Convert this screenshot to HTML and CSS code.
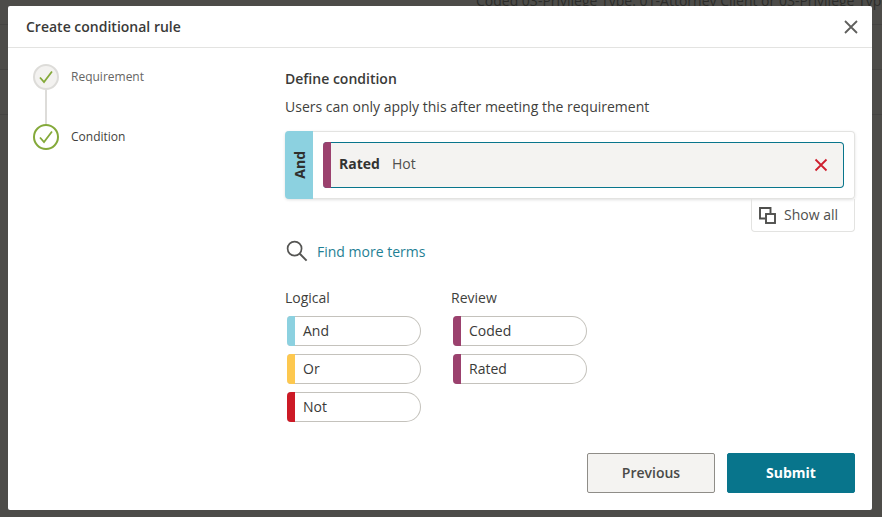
FILE: index.html
```html
<!DOCTYPE html>
<html lang="en">
<head>
<meta charset="utf-8">
<title>Create conditional rule</title>
<link rel="stylesheet" href="styles.css">
</head>
<body>
<div class="backdrop">
  <div class="bg-text">Coded 03-Privilege Type: 01-Attorney Client or 03-Privilege Type</div>
  <div class="bg-line line-a"></div>
  <div class="bg-line line-b"></div>
  <div class="bg-line line-c"></div>
</div>
<section class="modal">
  <header class="modal-head">
    <h1 class="modal-title">Create conditional rule</h1>
    <svg class="close-icon" width="14" height="14" viewBox="0 0 14 14"><path d="M1 1L13 13M13 1L1 13" fill="none" stroke="#5f5f5d" stroke-width="1.8"/></svg>
  </header>
  <div class="modal-body">
    <nav class="stepper">
      <div class="step">
        <span class="step-dot step-dot-done">
          <svg width="16" height="14" viewBox="0 0 16 14"><path d="M2 7.5L6 12L14 1.5" fill="none" stroke="#84a93a" stroke-width="1.8"/></svg>
        </span>
        <span class="step-label step-label-muted">Requirement</span>
      </div>
      <div class="step-line"></div>
      <div class="step">
        <span class="step-dot step-dot-active">
          <svg width="16" height="14" viewBox="0 0 16 14"><path d="M2 7.5L6 12L14 1.5" fill="none" stroke="#84a93a" stroke-width="1.8"/></svg>
        </span>
        <span class="step-label">Condition</span>
      </div>
    </nav>
    <div class="content">
      <h2 class="section-title">Define condition</h2>
      <p class="section-desc">Users can only apply this after meeting the requirement</p>
      <div class="rule-box">
        <div class="rule-op"><span class="rule-op-text">And</span></div>
        <div class="rule-main">
          <div class="rule-chip">
            <span class="rule-chip-name">Rated</span>
            <span class="rule-chip-value">Hot</span>
            <svg class="rule-chip-x" width="14" height="14" viewBox="0 0 14 14"><path d="M1.5 1.5L12.5 12.5M12.5 1.5L1.5 12.5" fill="none" stroke="#cf1f2e" stroke-width="1.8"/></svg>
          </div>
        </div>
      </div>
      <div class="show-row">
        <div class="show-all">
          <svg width="17" height="17" viewBox="0 0 17 17"><path d="M6 11.5H1V1H11.5V6" fill="none" stroke="#4f4f4d" stroke-width="1.9"/><rect x="7" y="7" width="9" height="9" fill="none" stroke="#4f4f4d" stroke-width="1.9"/></svg>
          <span>Show all</span>
        </div>
      </div>
      <div class="find-row">
        <svg width="22" height="22" viewBox="0 0 22 22"><circle cx="8.6" cy="8.6" r="7" fill="none" stroke="#555553" stroke-width="1.7"/><path d="M13.8 13.8L20.6 20.6" fill="none" stroke="#555553" stroke-width="2"/></svg>
        <span class="find-link">Find more terms</span>
      </div>
      <div class="palette">
        <div class="palette-col">
          <div class="palette-title">Logical</div>
          <div class="pill pill-and">And</div>
          <div class="pill pill-or">Or</div>
          <div class="pill pill-not">Not</div>
        </div>
        <div class="palette-col">
          <div class="palette-title">Review</div>
          <div class="pill pill-review">Coded</div>
          <div class="pill pill-review">Rated</div>
        </div>
      </div>
    </div>
  </div>
  <footer class="modal-foot">
    <button class="btn btn-secondary" type="button">Previous</button>
    <button class="btn btn-primary" type="button">Submit</button>
  </footer>
</section>
</body>
</html>
```

FILE: styles.css
```css
* { box-sizing: border-box; }
html, body { margin: 0; height: 100%; }
body {
  background: #4d4c49;
  font-family: "Open Sans", "Liberation Sans", sans-serif;
  color: #333331;
  overflow: hidden;
  position: relative;
}
.backdrop { position: absolute; inset: 0; overflow: hidden; }
.bg-text {
  position: absolute;
  left: 476px;
  top: -9px;
  font-size: 14px;
  line-height: 19px;
  white-space: nowrap;
  color: #2c2c2a;
}
.bg-line { position: absolute; left: 0; right: 0; height: 1px; background: #454442; }
.line-a { top: 24px; }
.line-b { top: 69px; }
.line-c { top: 114px; }

.modal {
  position: absolute;
  left: 8px;
  top: 6px;
  width: 864px;
  height: 504px;
  background: #fff;
  border-radius: 2px;
  display: flex;
  flex-direction: column;
}
.modal-head {
  height: 42px;
  flex: none;
  display: flex;
  align-items: center;
  justify-content: space-between;
  padding: 0 14px 0 18px;
  border-bottom: 1px solid #e3e3e1;
}
.modal-title { margin: 0; font-size: 14px; font-weight: 600; color: #3a3a38; }
.modal-body { flex: 1; display: flex; padding: 16px 17px 0 25px; min-height: 0; }

.stepper { width: 252px; flex: none; }
.step { display: flex; align-items: flex-start; height: 26px; }
.step-dot {
  width: 26px;
  height: 26px;
  border-radius: 50%;
  display: flex;
  align-items: center;
  justify-content: center;
  flex: none;
}
.step-dot-done { background: #f3f2f0; border: 2px solid #dddcd9; }
.step-dot-active { background: #fff; border: 2px solid #84a93a; }
.step-label { margin-left: 12px; font-size: 12px; line-height: 14px; margin-top: 6px; color: #3f3f3d; }
.step-label-muted { color: #666664; }
.step-line { width: 2px; height: 34px; margin-left: 12px; background: #dddcd9; }

.content { flex: 1; min-width: 0; padding-top: 5px; }
.section-title { margin: 0; font-size: 14px; font-weight: 600; line-height: 19px; color: #3a3a38; }
.section-desc { margin: 9px 0 0; font-size: 14px; line-height: 19px; color: #3f3f3d; }

.rule-box {
  margin-top: 15px;
  height: 68px;
  display: flex;
  border: 1px solid #e3e3e1;
  border-left: 0;
  border-radius: 4px;
  box-shadow: 0 1px 3px rgba(0,0,0,0.12);
}
.rule-op {
  width: 28px;
  flex: none;
  margin: -1px 0;
  background: #8cd1e0;
  border-radius: 4px 0 0 4px;
  display: flex;
  align-items: center;
  justify-content: center;
}
.rule-op-text {
  writing-mode: vertical-rl;
  transform: rotate(180deg);
  font-size: 14px;
  font-weight: 700;
  color: #2f2f2d;
}
.rule-main { flex: 1; padding: 10px 10px 0; min-width: 0; }
.rule-chip {
  height: 46px;
  display: flex;
  align-items: center;
  background: #f4f3f1;
  border: 1px solid #08758c;
  border-left: 0;
  border-radius: 4px;
  padding-right: 15px;
  font-size: 14px;
}
.rule-chip::before {
  content: "";
  width: 8px;
  align-self: stretch;
  margin: -1px 8px -1px 0;
  background: #9b416e;
  border-radius: 4px 0 0 4px;
}
.rule-chip-name { font-weight: 700; color: #333331; margin-top: -3px; }
.rule-chip-value { margin-left: 12px; margin-top: -3px; color: #4f4f4d; }
.rule-chip-x { margin-left: auto; }

.show-row { display: flex; justify-content: flex-end; }
.show-all {
  width: 104px;
  height: 33px;
  display: flex;
  align-items: center;
  gap: 8px;
  padding-left: 7px;
  border: 1px solid #e3e3e1;
  border-top: 0;
  border-radius: 0 0 4px 4px;
  font-size: 14px;
  color: #4f4f4d;
}
.show-all span { margin-top: -2px; }
.find-row { margin-top: 8px; display: flex; align-items: center; gap: 9px; padding-left: 1px; height: 22px; }
.find-link { font-size: 14px; color: #1f7f94; }

.palette { margin-top: 26px; display: flex; gap: 30px; }
.palette-title { font-size: 14px; line-height: 19px; color: #3f3f3d; margin-bottom: 9px; }
.pill {
  width: 134px;
  height: 30px;
  margin: 0 0 8px 2px;
  padding-bottom: 2px;
  display: flex;
  align-items: center;
  font-size: 14px;
  color: #3a3a38;
  border: 1px solid #c4c2bc;
  border-left: 0;
  border-radius: 4px 15px 15px 4px;
}
.pill::before {
  content: "";
  width: 8px;
  align-self: stretch;
  margin: -1px 8px -3px 0;
  background: var(--pill-color);
  border-radius: 4px 0 0 4px;
}
.pill-and { --pill-color: #8cd1e0; }
.pill-or { --pill-color: #fdc84f; }
.pill-not { --pill-color: #cc1a26; }
.pill-review { --pill-color: #9b416e; }

.modal-foot {
  flex: none;
  display: flex;
  justify-content: flex-end;
  gap: 12px;
  padding: 0 17px 17px;
}
.btn {
  width: 128px;
  height: 40px;
  font-family: inherit;
  font-size: 14px;
  border-radius: 2px;
  padding: 0 0 2px;
}
.btn-secondary { background: #f4f3f1; border: 1px solid #8f8d88; color: #4a4a48; font-weight: 600; }
.btn-primary { background: #08758c; border: 1px solid #08758c; color: #fff; font-weight: 700; }
```
